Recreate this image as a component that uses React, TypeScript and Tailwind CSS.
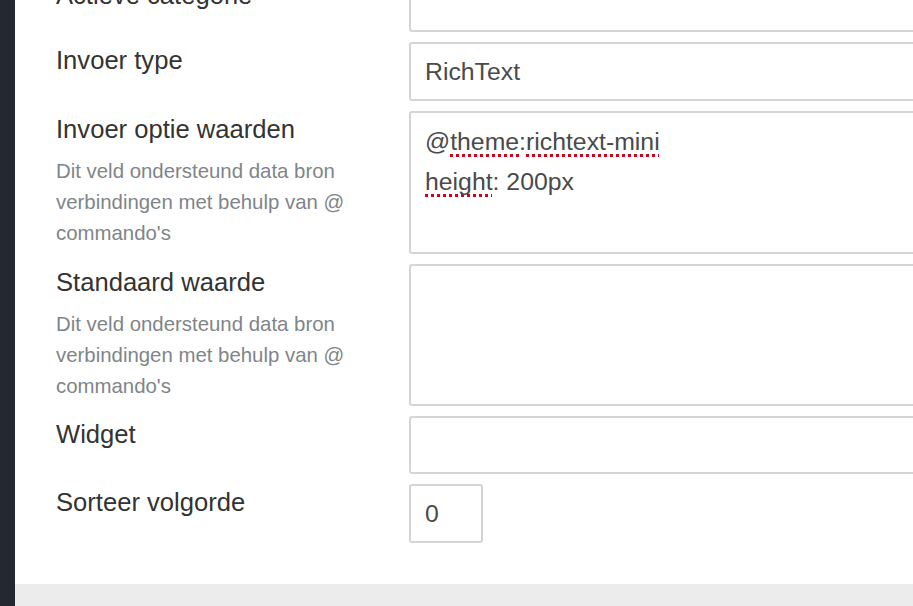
import type { ReactNode } from 'react';

const HELP = 'Dit veld ondersteund data bron verbindingen met behulp van @ commando\'s';

function Label({ text, help, className = '' }: { text: string; help?: boolean; className?: string }) {
  return (
    <div className={'w-[394px] shrink-0 pl-[41px] pr-[20px] ' + className}>
      <div className="text-[25.6px] leading-[36px] text-[#333]">{text}</div>
      {help && (
        <p className="mt-[9px] text-[20.4px] leading-[31px] text-[#7f8589]">{HELP}</p>
      )}
    </div>
  );
}

function Box({ className, children }: { className: string; children?: ReactNode }) {
  return (
    <div
      className={
        'border-2 border-[#d5d5d5] rounded-[3px] bg-white px-[14px] text-[24.8px] text-[#4a4a4a] ' +
        className
      }
    >
      {children}
    </div>
  );
}

// spellcheck squiggle, as the browser draws it under unknown words
function Typo({ children }: { children: ReactNode }) {
  return (
    <span className="underline decoration-dotted decoration-[#d0021b] decoration-[2.5px] underline-offset-[4px] [text-decoration-skip-ink:none]">
      {children}
    </span>
  );
}

export default function App() {
  return (
    <div
      className="w-[913px] h-[606px] overflow-hidden flex bg-[#242931]"
      style={{ fontFamily: '"Liberation Sans", Arial, Helvetica, sans-serif' }}
    >
      <div className="w-[15px] shrink-0" />
      <div className="flex-1 flex flex-col bg-white min-w-0">
        <div className="flex flex-col gap-[10px] mt-[-27px] pb-[41px]">
          <div className="flex">
            <Label text="Actieve categorie" className="pt-[4px]" />
            <Box className="w-[560px] h-[59px] shrink-0" />
          </div>

          <div className="flex">
            <Label text="Invoer type" />
            <Box className="w-[560px] h-[59px] shrink-0 flex items-center">RichText</Box>
          </div>

          <div className="flex">
            <Label text="Invoer optie waarden" help />
            <Box className="w-[560px] h-[143px] shrink-0 pt-[9px] leading-[40px]">
              <div>
                @<Typo>theme</Typo>:<Typo>richtext-mini</Typo>
              </div>
              <div>
                <Typo>height</Typo>: 200px
              </div>
            </Box>
          </div>

          <div className="flex">
            <Label text="Standaard waarde" help />
            <Box className="w-[560px] h-[142px] shrink-0" />
          </div>

          <div className="flex">
            <Label text="Widget" />
            <Box className="w-[560px] h-[58px] shrink-0" />
          </div>

          <div className="flex">
            <Label text="Sorteer volgorde" />
            <Box className="w-[74px] h-[59px] shrink-0 flex items-center">0</Box>
          </div>
        </div>
        <div className="flex-1 bg-[#ececec]" />
      </div>
    </div>
  );
}
